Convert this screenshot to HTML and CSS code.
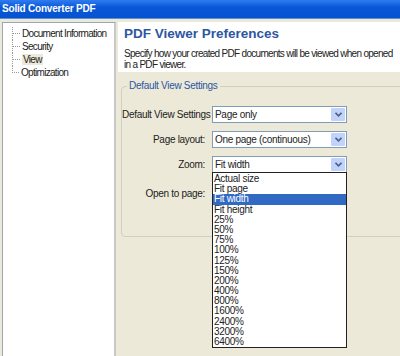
FILE: index.html
```html
<!DOCTYPE html>
<html lang="en">
<head>
    <meta charset="UTF-8">
    <title>Solid Converter PDF</title>
    <link rel="stylesheet" href="styles.css">
</head>
<body>
    <!-- Window title -->
    <header class="titlebar">Solid Converter PDF</header>

    <div class="window">
        <!-- Left tree -->
        <aside class="tree">
            <ul>
                <li>Document Information</li>
                <li>Security</li>
                <li><span class="current">View</span></li>
                <li class="last">Optimization</li>
            </ul>
        </aside>

        <!-- Right panel -->
        <main class="content">
            <div class="intro">
                <h1>PDF Viewer Preferences</h1>
                <p>Specify how your created PDF documents will be viewed when opened<br>in a PDF viewer.</p>
            </div>

            <section class="group">
                <span class="legend">Default View Settings</span>

                <div class="row">
                    <label>Default View Settings</label>
                    <div class="combo"><span>Page only</span><i class="arrow"><svg width="7" height="5" viewBox="0 0 7 5"><polyline points="0.5,0.8 3.5,3.8 6.5,0.8" fill="none" stroke="#4d6185" stroke-width="1.6"/></svg></i></div>
                </div>
                <div class="row">
                    <label>Page layout:</label>
                    <div class="combo"><span>One page (continuous)</span><i class="arrow"><svg width="7" height="5" viewBox="0 0 7 5"><polyline points="0.5,0.8 3.5,3.8 6.5,0.8" fill="none" stroke="#4d6185" stroke-width="1.6"/></svg></i></div>
                </div>
                <div class="row">
                    <label>Zoom:</label>
                    <div class="combo open">
                        <span>Fit width</span><i class="arrow"><svg width="7" height="5" viewBox="0 0 7 5"><polyline points="0.5,0.8 3.5,3.8 6.5,0.8" fill="none" stroke="#4d6185" stroke-width="1.6"/></svg></i>
                        <ul class="dropdown">
                            <li>Actual size</li>
                            <li>Fit page</li>
                            <li class="selected">Fit width</li>
                            <li>Fit height</li>
                            <li>25%</li>
                            <li>50%</li>
                            <li>75%</li>
                            <li>100%</li>
                            <li>125%</li>
                            <li>150%</li>
                            <li>200%</li>
                            <li>400%</li>
                            <li>800%</li>
                            <li>1600%</li>
                            <li>2400%</li>
                            <li>3200%</li>
                            <li>6400%</li>
                        </ul>
                    </div>
                </div>
                <div class="row last-row">
                    <label>Open to page:</label>
                </div>
            </section>
        </main>
    </div>
</body>
</html>
```

FILE: styles.css
```css
/* XP style dialog */
body {
    margin: 0;
    width: 400px;
    height: 356px;
    overflow: hidden;
    font-family: "Liberation Sans", Arial, sans-serif;
    font-size: 10px;
    letter-spacing: -0.3px;
    color: #222;
    background-color: #ece9d8;
}

.titlebar {
    height: 18px;
    line-height: 18px;
    padding-left: 2px;
    color: white;
    font-weight: bold;
    font-size: 10px;
    letter-spacing: -0.2px;
    background: linear-gradient(#2f7cf0, #0a58d8 40%, #0653d1);
    border-bottom: 1px solid #5c8ed8;
}

.window {
    display: flex;
    padding: 3px 0 0 2px;
    height: 340px;
}

.tree {
    width: 111px;
    background-color: white;
    border: 1px solid #9aa7b8;
    border-right: 2px solid #c8c8c8;
}

.tree ul {
    list-style: none;
    margin: 4px 0 0 9px;
    padding: 0;
}

.tree li {
    position: relative;
    height: 13px;
    line-height: 13px;
    padding-left: 9px;
    white-space: nowrap;
    letter-spacing: -0.7px;
    border-left: 1px dotted #999;
}

.tree li::before {
    content: "";
    position: absolute;
    left: 0;
    top: 6px;
    width: 7px;
    border-top: 1px dotted #999;
}

.tree li.last {
    border-left: none;
}

.tree li.last::after {
    content: "";
    position: absolute;
    left: 0;
    top: 0;
    height: 7px;
    border-left: 1px dotted #999;
}

.current {
    background-color: #ece9d8;
    padding: 0 1px;
}

.content {
    flex: 1;
    margin-left: 2px;
}

.intro {
    background-color: white;
    height: 47px;
    padding: 3px 0 0 6px;
}

.intro h1 {
    margin: 0;
    font-size: 13.5px;
    line-height: 18px;
    letter-spacing: 0;
    color: #2d56a3;
}

.intro p {
    margin: 5px 0 0;
    font-size: 10px;
    line-height: 11px;
    letter-spacing: -0.7px;
    white-space: nowrap;
    color: #222;
}

.group {
    position: relative;
    margin: 14px -20px 0 3px;
    height: 134px;
    border: 1px solid #d0d0bf;
    border-radius: 4px;
    padding-top: 15px;
}

.legend {
    position: absolute;
    top: -7px;
    left: 5px;
    padding: 0 2px;
    background-color: #ece9d8;
    color: #2d56a3;
}

.row {
    display: flex;
    align-items: center;
    height: 25px;
}

.last-row {
    margin-top: 4px;
}

.row label {
    width: 83px;
    text-align: right;
    margin-right: 7px;
    white-space: nowrap;
}

.combo {
    position: relative;
    display: flex;
    align-items: center;
    width: 133px;
    height: 15px;
    border: 1px solid #7f9db9;
    background-color: white;
}

.combo span {
    flex: 1;
    padding-left: 2px;
}

.arrow {
    display: flex;
    align-items: center;
    justify-content: center;
    width: 14px;
    height: 13px;
    margin-right: 1px;
    background-color: #c1d3fb;
    border-radius: 1px;
}

.dropdown {
    position: absolute;
    top: 15px;
    left: -1px;
    width: 133px;
    margin: 0;
    padding: 1px 0 0;
    list-style: none;
    background-color: white;
    border: 1px solid #222;
    z-index: 2;
}

.dropdown li {
    height: 10.2px;
    line-height: 10.2px;
    padding-left: 1px;
    font-size: 10px;
}

.dropdown li.selected {
    background-color: #316ac5;
    color: white;
}
```
